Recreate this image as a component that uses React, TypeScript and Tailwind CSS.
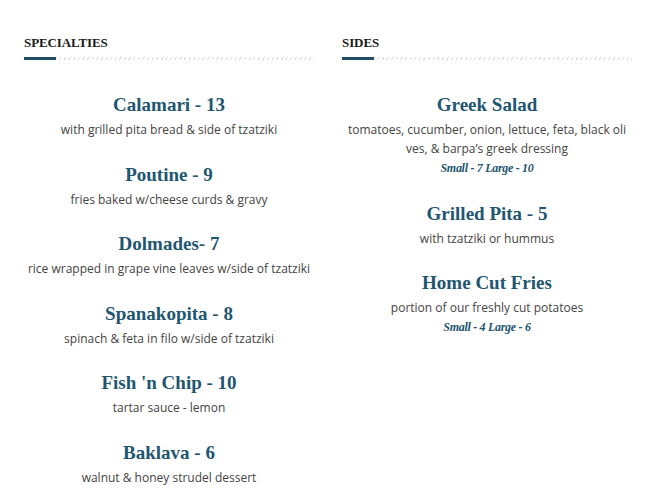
import React from "react";

type Item = {
  title: string;
  desc: React.ReactNode;
  sizes?: string;
};

const specialties: Item[] = [
  { title: "Calamari - 13", desc: "with grilled pita bread & side of tzatziki" },
  { title: "Poutine - 9", desc: "fries baked w/cheese curds & gravy" },
  { title: "Dolmades- 7", desc: "rice wrapped in grape vine leaves w/side of tzatziki" },
  { title: "Spanakopita - 8", desc: "spinach & feta in filo w/side of tzatziki" },
  { title: "Fish 'n Chip - 10", desc: "tartar sauce - lemon" },
  { title: "Baklava - 6", desc: "walnut & honey strudel dessert" },
];

const sides: Item[] = [
  {
    title: "Greek Salad",
    desc: (
      <>
        tomatoes, cucumber, onion, lettuce, feta, black oli
        <br />
        ves, & barpa’s greek dressing
      </>
    ),
    sizes: "Small - 7 Large - 10",
  },
  { title: "Grilled Pita - 5", desc: "with tzatziki or hummus" },
  {
    title: "Home Cut Fries",
    desc: "portion of our freshly cut potatoes",
    sizes: "Small - 4 Large - 6",
  },
];

function Heading({ label }: { label: string }) {
  return (
    <div>
      <h3 className="font-['Liberation_Serif',serif] font-bold text-[13px] leading-[14px] tracking-[-0.1px] text-[#1a1a1a] uppercase">
        {label}
      </h3>
      <div className="mt-[7px] flex h-[3px] items-center">
        <div className="h-[3px] w-[32px] bg-[#1f4f66]" />
        <div className="h-[3px] flex-1 bg-[repeating-linear-gradient(120deg,#dcdcdc_0px,#dcdcdc_1px,transparent_1px,transparent_4px)]" />
      </div>
    </div>
  );
}

function MenuItem({ item }: { item: Item }) {
  return (
    <div className="mb-[24.6px] text-center">
      <h4 className="font-['Liberation_Serif',serif] font-bold text-[19px] leading-[22px] text-[#1f5670]">
        {item.title}
      </h4>
      <p className="mt-[4px] font-['Open_Sans',sans-serif] text-[12px] leading-[19px] text-[#444]">
        {item.desc}
      </p>
      {item.sizes && (
        <p className="font-['Liberation_Serif',serif] italic font-bold text-[12px] leading-[20px] tracking-[-0.3px] text-[#1f5670]">
          {item.sizes}
        </p>
      )}
    </div>
  );
}

function Column({ label, items }: { label: string; items: Item[] }) {
  return (
    <div className="w-[290px]">
      <Heading label={label} />
      <div className="mt-[34px]">
        {items.map((item) => (
          <MenuItem key={item.title} item={item} />
        ))}
      </div>
    </div>
  );
}

export default function App() {
  return (
    <div className="h-[495px] overflow-hidden bg-white pt-[36px] pl-[24px]">
      <div className="flex gap-[28px]">
        <Column label="Specialties" items={specialties} />
        <Column label="Sides" items={sides} />
      </div>
    </div>
  );
}
